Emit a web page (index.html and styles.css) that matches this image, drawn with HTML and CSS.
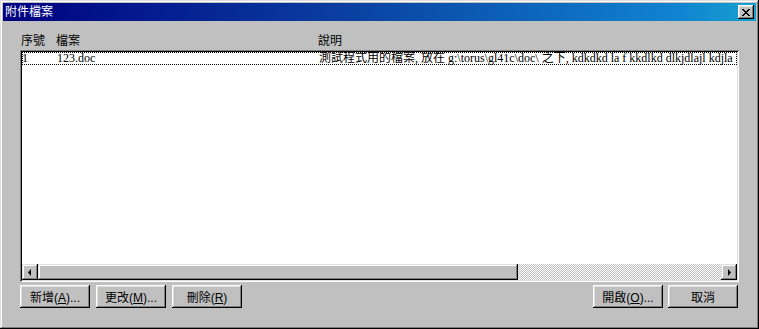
FILE: index.html
```html
<html lang="zh-Hant">
<head>
<meta charset="UTF-8">
<title>附件檔案</title>
<link rel="stylesheet" href="styles.css">
</head>
<body>

<div class="window">
  <div class="titlebar">
    <span class="title">附件檔案</span>
    <button class="close-btn">
      <svg width="8" height="7" viewBox="0 0 8 7"><path d="M0 0h2v1h1v1h2V1h1V0h2v1H7v1H6v1H5v1h1v1h1v1h1v1H6V6H5V5H3v1H2v1H0V6h1V5h1V4h1V3H2V2H1V1H0z" fill="#000"/></svg>
    </button>
  </div>

  <div class="content">
    <div class="list-head">
      <span class="col-no">序號</span>
      <span class="col-file">檔案</span>
      <span class="col-desc">說明</span>
    </div>

    <div class="listbox">
      <div class="rows">
        <div class="row focus">
          <span class="col-no">1</span>
          <span class="col-file">123.doc</span>
          <span class="col-desc">測試程式用的檔案, 放在 g:\torus\gl41c\doc\ 之下, kdkdkd la f kkdlkd dlkjdlajl kdjla</span>
        </div>
      </div>
      <div class="hscroll">
        <div class="arrow-btn">
          <svg width="4" height="7" viewBox="0 0 4 7"><path d="M3 0v7L0 3.5z" fill="#000"/></svg>
        </div>
        <div class="thumb"></div>
        <div class="track"></div>
        <div class="arrow-btn">
          <svg width="4" height="7" viewBox="0 0 4 7"><path d="M1 0v7l3-3.5z" fill="#000"/></svg>
        </div>
      </div>
    </div>

    <div class="button-row">
      <div class="group">
        <button class="btn">新增(<u>A</u>)...</button>
        <button class="btn">更改(<u>M</u>)...</button>
        <button class="btn">刪除(<u>R</u>)</button>
      </div>
      <div class="group">
        <button class="btn">開啟(<u>O</u>)...</button>
        <button class="btn">取消</button>
      </div>
    </div>
  </div>
</div>

</body>
</html>
```

FILE: styles.css
```css
body {
  margin: 0;
  padding: 0;
  background-color: #c0c0c0;
  font-family: 'Liberation Sans', 'Noto Sans CJK TC', sans-serif;
  font-size: 12px;
  line-height: 14px;
  color: #000;
}
.window {
  width: 759px;
  height: 329px;
  box-sizing: border-box;
  padding: 3px;
  background-color: #c0c0c0;
  box-shadow: inset -1px -1px #000, inset 1px 1px #dfdfdf, inset -2px -2px #808080, inset 2px 2px #fff;
  display: flex;
  flex-direction: column;
}
.titlebar {
  height: 18px;
  background: linear-gradient(to right, #000080 0%, #0a3fa0 45%, #1084d0 90%, #18a0d0 100%);
  display: flex;
  justify-content: space-between;
  align-items: center;
  padding: 0 2px 0 2px;
}
.title {
  color: #fff;
  font-size: 12px;
  line-height: 14px;
}
.close-btn {
  width: 16px;
  height: 14px;
  padding: 0;
  border: none;
  background-color: #c0c0c0;
  box-shadow: inset -1px -1px #000, inset 1px 1px #fff, inset -2px -2px #808080, inset 2px 2px #dfdfdf;
  display: flex;
  align-items: center;
  justify-content: center;
}
.content {
  flex: 1;
  padding: 13px 17px 0 17px;
  display: flex;
  flex-direction: column;
}
.list-head {
  display: flex;
  height: 16px;
  padding-left: 1px;
}
.col-no {
  width: 35px;
  flex-shrink: 0;
}
.col-file {
  width: 262px;
  flex-shrink: 0;
}
.col-desc {
  white-space: nowrap;
}
.listbox {
  width: 719px;
  height: 232px;
  box-sizing: border-box;
  padding: 2px;
  background-color: #fff;
  box-shadow: inset 1px 1px #808080, inset -1px -1px #fff, inset 2px 2px #000, inset -2px -2px #dfdfdf;
  display: flex;
  flex-direction: column;
}
.rows {
  flex: 1;
  overflow: hidden;
}
.row {
  display: flex;
  height: 13px;
  line-height: 13px;
  font-family: 'Liberation Serif', 'Noto Sans CJK TC', serif;
  white-space: nowrap;
  overflow: hidden;
}
.row.focus {
  outline: 1px dotted #000;
  outline-offset: -1px;
}
.hscroll {
  height: 16px;
  display: flex;
}
.arrow-btn {
  width: 16px;
  height: 16px;
  box-sizing: border-box;
  background-color: #c0c0c0;
  box-shadow: inset -1px -1px #000, inset 1px 1px #dfdfdf, inset -2px -2px #808080, inset 2px 2px #fff;
  display: flex;
  align-items: center;
  justify-content: center;
}
.thumb {
  width: 480px;
  background-color: #c0c0c0;
  box-shadow: inset -1px -1px #000, inset 1px 1px #dfdfdf, inset -2px -2px #808080, inset 2px 2px #fff;
}
.track {
  flex: 1;
  background-color: #fff;
  background-image: conic-gradient(#c0c0c0 25%, #fff 0 50%, #c0c0c0 0 75%, #fff 0);
  background-size: 2px 2px;
}
.button-row {
  display: flex;
  justify-content: space-between;
  width: 718px;
  margin-top: 3px;
}
.group {
  display: flex;
  gap: 6px;
}
.group + .group {
  gap: 5px;
}
.btn {
  width: 70px;
  height: 23px;
  padding: 0;
  border: none;
  background-color: #c0c0c0;
  font-family: 'Liberation Sans', 'Noto Sans CJK TC', sans-serif;
  font-size: 12px;
  color: #000;
  box-shadow: inset -1px -1px #000, inset 1px 1px #fff, inset -2px -2px #808080, inset 2px 2px #dfdfdf;
}
```
